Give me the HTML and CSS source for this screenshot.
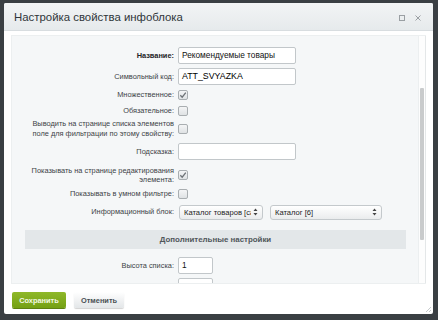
FILE: index.html
```html
<!DOCTYPE html>
<html lang="ru">
<head>
<meta charset="utf-8">
<link rel="stylesheet" href="styles.css">
</head>
<body>
<div class="dialog">
  <div class="head">
    <span class="title">Настройка свойства инфоблока</span>
    <span class="icons">
      <svg class="ico" viewBox="0 0 6 6" width="6" height="6"><rect x="0.5" y="0.5" width="5" height="5" fill="none" stroke="#9a9fa3" stroke-width="1"/></svg>
      <svg class="ico" viewBox="0 0 6 6" width="6" height="6"><path d="M0.5 0.5L5.5 5.5M5.5 0.5L0.5 5.5" stroke="#9a9fa3" stroke-width="1"/></svg>
    </span>
  </div>
  <div class="body">
    <div class="panel">
      <div class="content">
        <div class="row h21"><label class="lbl bold">Название:</label><div class="ctl"><span class="inp w118">Рекомендуемые товары</span></div></div>
        <div class="row h21"><label class="lbl">Символьный код:</label><div class="ctl"><span class="inp w118 caps">ATT_SVYAZKA</span></div></div>
        <div class="row h16"><label class="lbl">Множественное:</label><div class="ctl"><span class="cb on"><svg viewBox="0 0 10 10" width="10" height="10"><path d="M2.3 5.2L4.2 7.2L7.8 2.6" fill="none" stroke="#6f7478" stroke-width="1.3"/></svg></span></div></div>
        <div class="row h15"><label class="lbl">Обязательное:</label><div class="ctl"><span class="cb"></span></div></div>
        <div class="row h21"><label class="lbl two">Выводить на странице списка элементов<br>поле для фильтрации по этому свойству:</label><div class="ctl"><span class="cb"></span></div></div>
        <div class="row h25"><label class="lbl">Подсказка:</label><div class="ctl"><span class="inp w118"></span></div></div>
        <div class="row h22"><label class="lbl two">Показывать на странице редактирования<br>элемента:</label><div class="ctl"><span class="cb on"><svg viewBox="0 0 10 10" width="10" height="10"><path d="M2.3 5.2L4.2 7.2L7.8 2.6" fill="none" stroke="#6f7478" stroke-width="1.3"/></svg></span></div></div>
        <div class="row h16"><label class="lbl">Показывать в умном фильтре:</label><div class="ctl"><span class="cb"></span></div></div>
        <div class="row h20"><label class="lbl">Информационный блок:</label>
          <div class="ctl sels">
            <span class="sel w84"><span class="stxt">Каталог товаров [catalog]</span><svg class="arr" viewBox="0 0 5 8" width="5" height="8"><path d="M2.5 0.5L4.5 3H0.5Z M2.5 7.5L4.5 5H0.5Z" fill="#444"/></svg></span>
            <span class="sel w112"><span class="stxt">Каталог [6]</span><svg class="arr" viewBox="0 0 5 8" width="5" height="8"><path d="M2.5 0.5L4.5 3H0.5Z M2.5 7.5L4.5 5H0.5Z" fill="#444"/></svg></span>
          </div>
        </div>
        <div class="section">Дополнительные настройки</div>
        <div class="row h21 mt6"><label class="lbl">Высота списка:</label><div class="ctl"><span class="inp w35">1</span></div></div>
        <div class="row h21"><label class="lbl">Ограничить по ширине (0 - не ограничивать):</label><div class="ctl"><span class="inp w35"></span><span class="px">px</span></div></div>
      </div>
      <div class="track"><div class="thumb"></div></div>
    </div>
  </div>
  <div class="foot">
    <span class="btn save">Сохранить</span>
    <span class="btn cancel">Отменить</span>
  </div>
  <div class="grip"></div>
</div>
</body>
</html>
```
FILE: styles.css
```css
html, body {
  margin: 0;
  padding: 0;
}
body {
  width: 438px;
  height: 320px;
  overflow: hidden;
  background: #3a3f43;
  font-family: "Liberation Sans", Arial, sans-serif;
}
.dialog {
  position: relative;
  margin: 3px 5px 0 4px;
  height: 311px;
  background: #ffffff;
  border-radius: 2px;
  display: flex;
  flex-direction: column;
  overflow: hidden;
}
.head {
  height: 27px;
  flex: none;
  display: flex;
  align-items: center;
  justify-content: space-between;
  padding: 0 12px 0 10px;
  background: linear-gradient(#f2f4f5, #e6eaec);
  border-bottom: 1px solid #d8dde0;
}
.title {
  font-size: 11.4px;
  color: #2f3539;
  padding-top: 1px;
}
.icons {
  display: flex;
  gap: 10px;
  align-items: center;
  padding-top: 2px;
}
.ico {
  display: block;
}
.body {
  flex: none;
  padding: 4px 7px 0 7px;
}
.panel {
  height: 249px;
  display: flex;
  background: #f5f7f8;
  border: 1px solid #eceff0;
  border-right: none;
  box-sizing: border-box;
}
.content {
  flex: 1;
  overflow: hidden;
  padding-top: 9px;
}
.track {
  width: 8px;
  flex: none;
  background: #fdfdfd;
  border-left: 1px solid #eceff0;
  border-right: 1px solid #e4e7e8;
  box-sizing: border-box;
}
.thumb {
  margin: 52px 0 0 1px;
  width: 4px;
  height: 152px;
  background: #c9cbcc;
  border-radius: 1px;
}
.row {
  display: grid;
  grid-template-columns: 162px 1fr;
  column-gap: 4px;
  align-items: center;
}
.h15 { height: 15px; }
.h16 { height: 16px; }
.h20 { height: 20px; }
.h21 { height: 21px; }
.h22 { height: 22px; }
.h25 { height: 25px; }
.mt6 { margin-top: 6px; }
.lbl {
  text-align: right;
  font-size: 7.4px;
  line-height: 9.5px;
  color: #3c4246;
  white-space: nowrap;
}
.lbl.bold {
  font-weight: bold;
  color: #1f2427;
}
.ctl {
  display: flex;
  align-items: center;
}
.inp {
  display: block;
  box-sizing: border-box;
  height: 17px;
  border: 1px solid #c2c7ca;
  border-radius: 2px;
  background: #ffffff;
  font-size: 8.3px;
  line-height: 15px;
  padding-left: 3px;
  color: #111;
}
.inp.caps {
  font-size: 8.8px;
  color: #000;
}
.w118 { width: 118px; }
.w35 { width: 35px; }
.px {
  font-size: 7.4px;
  color: #3c4246;
  margin-left: 2px;
}
.cb {
  display: block;
  box-sizing: border-box;
  width: 10px;
  height: 10px;
  border: 1px solid #a9aeb1;
  border-radius: 2px;
  background: linear-gradient(#f4f5f6, #dfe2e4);
  position: relative;
}
.cb svg {
  position: absolute;
  left: -1px;
  top: -1px;
}
.sels {
  gap: 7px;
  padding-left: 1px;
}
.sel {
  display: flex;
  align-items: center;
  justify-content: space-between;
  box-sizing: border-box;
  height: 15px;
  border: 1px solid #c4c9cc;
  border-radius: 3px;
  background: linear-gradient(#ffffff, #eaeced);
  padding: 0 4px 0 4px;
  font-size: 7.6px;
  color: #222;
}
.stxt {
  overflow: hidden;
  white-space: nowrap;
  flex: 1;
}
.arr {
  flex: none;
  margin-left: 2px;
}
.w84 { width: 84px; }
.w112 { width: 112px; }
.section {
  margin: 8px 12px 0 13px;
  height: 19px;
  background: #e3e7e9;
  font-size: 7.9px;
  font-weight: bold;
  color: #50565a;
  display: flex;
  align-items: center;
  justify-content: center;
}
.foot {
  flex: none;
  display: flex;
  gap: 8px;
  padding: 8px 8px 0 8px;
}
.btn {
  display: flex;
  align-items: center;
  justify-content: center;
  box-sizing: border-box;
  height: 16px;
  border-radius: 2px;
  font-size: 7.4px;
  font-weight: bold;
}
.save {
  width: 54px;
  background: linear-gradient(#8fb829, #74a014);
  color: #f4f9e6;
  box-shadow: 0 1px 0 #5e8210;
}
.cancel {
  width: 50px;
  background: linear-gradient(#ffffff, #e3e6e8);
  color: #4a5054;
  box-shadow: 0 1px 1px rgba(0,0,0,0.18);
}
.grip {
  position: absolute;
  right: 2px;
  bottom: 2px;
  width: 6px;
  height: 6px;
  background: linear-gradient(135deg, transparent 50%, #c7cbcd 50%, #c7cbcd 60%, transparent 60%, transparent 75%, #c7cbcd 75%, #c7cbcd 85%, transparent 85%);
}
```
